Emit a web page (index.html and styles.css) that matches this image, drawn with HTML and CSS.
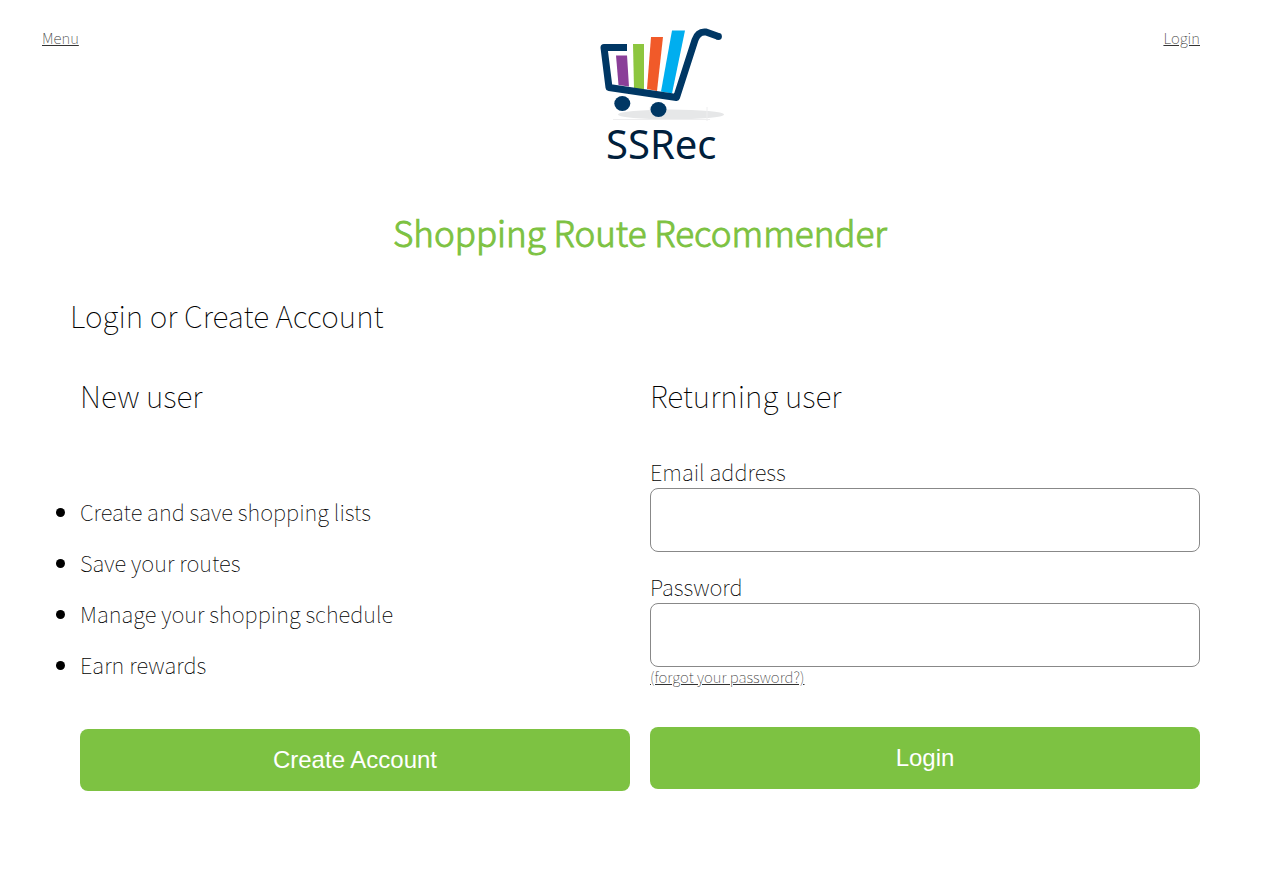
FILE: index.html
```html
<!DOCTYPE html>
<html lang="en">
<head>
  <meta charset="utf-8">
  <meta name="viewport" content="width=device-width, initial-scale=1">
  <title>Shopping Route Recommender</title>
  <link rel="stylesheet" href="styles.css">
</head>
<body>
  <header class="site-header">
    <a class="small-link" href="#menu">Menu</a>
    <a class="logo-link" href="#home">
      <svg class="logo" width="240" height="156" viewBox="501 15 240 156" role="img" aria-label="SSRec">
        <ellipse cx="671" cy="114.500" rx="53" ry="5" fill="#e6e7e8"/>
        <path d="M613 119.500H710M650 107v5M707 107v14" stroke="#eeeeef" stroke-width="1" fill="none"/>
        <path d="M616 55.500h11l2 31-10.500-1.500z" fill="#8a3f98"/>
        <path d="M633 44h11v45h-10z" fill="#8dc63f"/>
        <path d="M651 37h12l-6 54-10-2z" fill="#f15a29"/>
        <path d="M672 30.500h13l-13 63-11-2z" fill="#00aeef"/>
        <path d="M627 47.500H604L609 87.500 676.500 97.500 695 40Q698 31 706 32L718.500 36.500" fill="none" stroke="#003764" stroke-width="7" stroke-linejoin="round"/>
        <circle cx="718.500" cy="36.500" r="3.400" fill="#003764"/>
        <ellipse cx="622.300" cy="103.500" rx="8" ry="7.500" fill="#003764"/>
        <ellipse cx="658.500" cy="109.500" rx="8" ry="7.500" fill="#003764"/>
        <text class="logo-text" x="606" y="159">SSRec</text>
      </svg>
    </a>
    <a class="small-link header-login" href="#login">Login</a>
  </header>
  <main class="page">
    <h1 class="title">Shopping Route Recommender</h1>
    <h2 class="heading">Login or Create Account</h2>
    <div class="columns">
      <section class="column">
        <h3 class="heading">New user</h3>
        <ul class="benefits">
          <li>Create and save shopping lists</li>
          <li>Save your routes</li>
          <li>Manage your shopping schedule</li>
          <li>Earn rewards</li>
        </ul>
        <button class="button" type="button">Create Account</button>
      </section>
      <section class="column">
        <h3 class="heading">Returning user</h3>
        <form class="login-form">
          <div class="field">
            <label for="email">Email address</label>
            <input id="email" type="email">
          </div>
          <div class="field">
            <label for="password">Password</label>
            <input id="password" type="password">
            <a class="small-link" href="#forgot">(forgot your password?)</a>
          </div>
          <button class="button login-button" type="submit">Login</button>
        </form>
      </section>
    </div>
  </main>
</body>
</html>
```
FILE: styles.css
```css
* {
  box-sizing: border-box;
}

body {
  margin: 0;
  background: #fff;
  color: #000;
  font-family: "Noto Sans CJK SC", "Noto Sans", sans-serif;
  font-size: 22px;
  font-weight: 100;
  line-height: 31px;
}

.site-header {
  display: grid;
  grid-template-columns: 1fr auto 1fr;
  align-items: start;
  padding: 15px 79px 0 42px;
}

.site-header .small-link {
  margin-top: 13px;
}

.small-link {
  justify-self: start;
  align-self: flex-start;
  color: #333;
  font-size: 15px;
  line-height: 20px;
}

.site-header .header-login {
  justify-self: end;
}

.logo {
  display: block;
}

.logo-text {
  font-family: "Noto Sans", sans-serif;
  font-size: 40px;
  font-weight: 400;
  fill: #00203c;
}

.page {
  padding: 36px 69px 40px 70px;
}

.title {
  margin: 0 0 38px;
  color: #7dc242;
  font-size: 35px;
  font-weight: 300;
  -webkit-text-stroke: 1px #7dc242;
  line-height: 50px;
  text-align: center;
}

.heading {
  margin: 0;
  font-size: 30px;
  font-weight: 100;
  line-height: 40px;
}

.columns {
  display: grid;
  grid-template-columns: 1fr 1fr;
  gap: 20px;
  margin-top: 40px;
  padding: 0 10px;
}

.column {
  display: flex;
  flex-direction: column;
}

.benefits {
  display: flex;
  flex-direction: column;
  gap: 20px;
  margin: 81px 0 49px;
  padding: 0;
}

.login-form {
  display: flex;
  flex-direction: column;
  gap: 19px;
  margin-top: 41px;
}

.field {
  display: flex;
  flex-direction: column;
}

.field label {
  padding-bottom: 1px;
}

.field input {
  width: 100%;
  height: 64px;
  padding: 0 16px;
  border: 1px solid #888;
  border-radius: 8px;
  background: #fff;
  font: inherit;
}

.button {
  width: 100%;
  height: 62px;
  border: 0;
  border-radius: 8px;
  background: #7dc242;
  color: #fff;
  font-family: "Liberation Sans", Arial, sans-serif;
  font-size: 24px;
  cursor: pointer;
}

.login-button {
  margin-top: 21px;
}
```
